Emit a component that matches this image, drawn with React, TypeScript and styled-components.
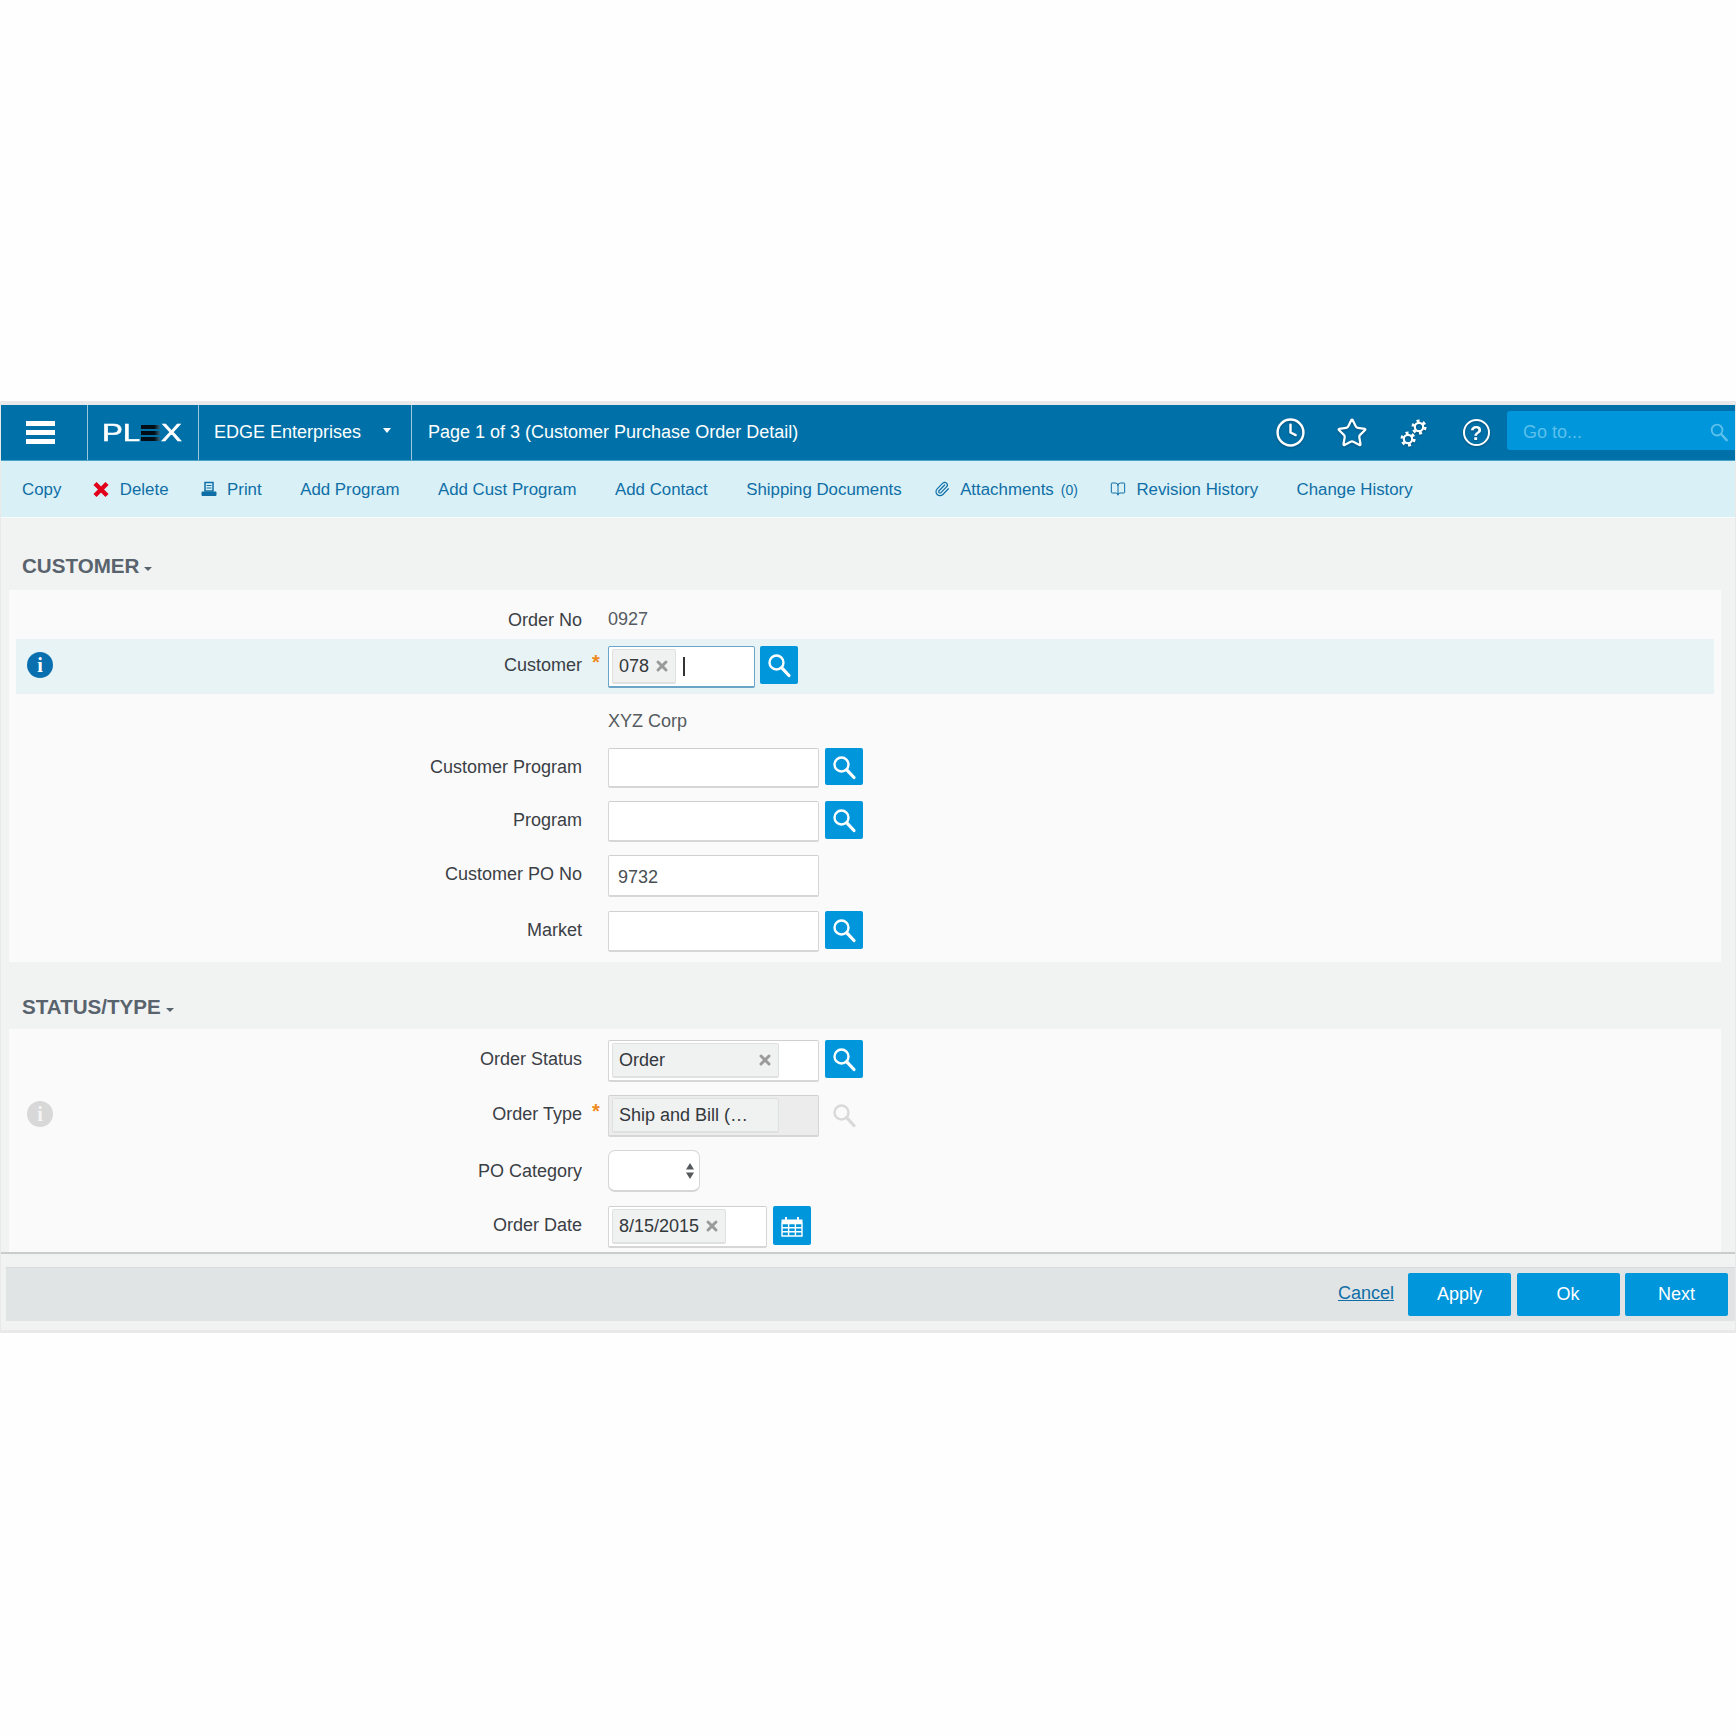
import React from "react";
import styled, { createGlobalStyle } from "styled-components";
import { BookOpen, Clock, Paperclip, Star, X } from "lucide-react";

const GlobalStyle = createGlobalStyle`
  html, body { margin: 0; padding: 0; background: #fefefe; }
  body { font-family: "Liberation Sans", Arial, sans-serif; }
`;

const Frame = styled.div`
  margin-top: 401px;
  width: 1736px;
  box-sizing: border-box;
  border: solid #e9e9e9;
  border-width: 4px 1px 3px 1px;
  background: #f1f3f3;
`;

const Header = styled.header`
  display: flex;
  height: 56px;
  box-sizing: border-box;
  background: #0071a8;
  border-bottom: 1px solid #4ba3c9;
  color: #fff;
  font-size: 18px;
`;

const HeaderCell = styled.div<{ $width?: number; $pad?: number; $sep?: boolean }>`
  display: flex;
  align-items: center;
  box-sizing: border-box;
  ${(p) => (p.$width ? `width: ${p.$width}px;` : "")}
  padding-left: ${(p) => p.$pad ?? 0}px;
  ${(p) => (p.$sep ? "border-right: 1px solid #9cc8dd;" : "")}
`;

const Burger = styled.div`
  display: flex;
  flex-direction: column;
  justify-content: space-between;
  width: 29px;
  height: 23px;
  margin-top: -1px;
  & > span { display: block; height: 5px; background: #fff; }
`;

const Logo = styled.div`
  display: flex;
  align-items: center;
  width: 80px;
  height: 20px;
`;

const LogoText = styled.span<{ $width: number }>`
  display: inline-block;
  width: ${(p) => p.$width}px;
  font-size: 23px;
  line-height: 20px;
  color: #fff;
  transform: scaleX(1.36);
  transform-origin: left center;
  font-weight: 400;
  -webkit-text-stroke: 0.5px #fff;
`;

const LogoBars = styled.span`
  display: flex;
  flex-direction: column;
  justify-content: space-between;
  width: 19px;
  height: 16px;
  margin-right: 1px;
  & > i { display: block; height: 4px; background: linear-gradient(90deg, #020d15 70%, #2f6685); }
`;

const CompanyName = styled.span`
  white-space: nowrap;
`;

const CaretWhite = styled.span`
  width: 0;
  height: 0;
  margin-left: 22px;
  margin-bottom: 4px;
  border: 4px solid transparent;
  border-top: 5px solid #fff;
  border-bottom: 0;
`;

const IconSlots = styled.div`
  margin-left: auto;
  display: flex;
  align-items: center;
`;

const IconSlot = styled.div`
  width: 62px;
  display: flex;
  justify-content: center;
  align-items: center;
  color: #fff;
  filter: drop-shadow(0 1px 1px rgba(0, 40, 70, 0.45));
`;

const HelpGlyph = styled.span`
  display: flex;
  align-items: center;
  justify-content: center;
  width: 27px;
  height: 27px;
  box-sizing: border-box;
  border: 2.4px solid #fff;
  border-radius: 50%;
  font-size: 20px;
  font-weight: 700;
  line-height: 1;
`;

const GoTo = styled.div`
  display: flex;
  align-items: center;
  justify-content: space-between;
  width: 228px;
  height: 39px;
  margin-top: -4px;
  box-sizing: border-box;
  padding: 3px 6px 0 16px;
  background: #0096dc;
  border-radius: 3px 0 0 3px;
  color: #5cc0ea;
`;

const Toolbar = styled.nav`
  display: flex;
  align-items: center;
  gap: 38.5px;
  height: 57px;
  box-sizing: border-box;
  padding: 2px 0 0 21px;
  background: #d9f1f6;
  border-bottom: 1px solid #f6fbfc;
  font-size: 16.85px;
  color: #0f6ea6;
`;

const ToolItem = styled.span<{ $icon?: boolean }>`
  display: inline-flex;
  align-items: center;
  gap: 10.5px;
  white-space: nowrap;
  ${(p) => (p.$icon ? "margin-left: -6.5px;" : "")}
`;

const ToolIcon = styled.span`
  display: inline-flex;
  justify-content: center;
  width: 16px;
  margin-top: -2px;
`;

const Count = styled.small`
  font-size: 14px;
  margin-left: 7px;
`;

const Content = styled.main`
  padding: 0 14px 0 8px;
`;

const SectionHead = styled.h2<{ $height: number; $under: number }>`
  display: flex;
  align-items: center;
  gap: 5px;
  height: ${(p) => p.$height}px;
  box-sizing: border-box;
  margin: 0;
  padding: ${(p) => p.$height - p.$under * 2}px 0 0 13px;
  font-size: 20.6px;
  font-weight: 700;
  color: #59636d;
`;

const CaretGrey = styled.span`
  width: 0;
  height: 0;
  margin-top: 5px;
  border: 4.5px solid transparent;
  border-top: 4.5px solid #59636d;
  border-bottom: 0;
`;

const Panel = styled.section<{ $height: number; $top: number }>`
  height: ${(p) => p.$height}px;
  box-sizing: border-box;
  padding-top: ${(p) => p.$top}px;
  background: #fafafa;
  overflow: hidden;
`;

const Row = styled.div<{ $height: number; $before?: number; $band?: boolean }>`
  display: grid;
  grid-template-columns: 566px 26px 1fr;
  height: ${(p) => p.$height}px;
  box-sizing: border-box;
  margin: ${(p) => p.$before ?? 0}px 7px 0;
  ${(p) => (p.$band ? "background: #e8f3f6; padding-top: 7px;" : "")}
  font-size: 18px;
  line-height: 38px;
`;

const LabelCell = styled.div<{ $down?: number }>`
  display: flex;
  align-items: center;
  height: 38px;
  padding-top: ${(p) => p.$down ?? 0}px;
`;

const Label = styled.label`
  margin-left: auto;
  color: #3a4046;
  white-space: nowrap;
`;

const InfoBadge = styled.span<{ $muted?: boolean }>`
  display: flex;
  align-items: center;
  justify-content: center;
  width: 26px;
  height: 26px;
  margin-left: 11px;
  border-radius: 50%;
  background: ${(p) => (p.$muted ? "#d8d8d8" : "#0a6fae")};
  color: ${(p) => (p.$muted ? "#f5f5f5" : "#fff")};
  font: 700 20px/26px "Liberation Serif", serif;
`;

const Required = styled.span`
  display: block;
  padding-left: 10px;
  line-height: 33px;
  color: #f08a1c;
  font-size: 20px;
  font-weight: 700;
`;

const Controls = styled.div<{ $gap?: number }>`
  display: flex;
  align-items: flex-start;
  gap: ${(p) => p.$gap ?? 6}px;
`;

const Value = styled.span<{ $down?: number }>`
  color: #555b60;
  padding-top: ${(p) => p.$down ?? 0}px;
`;

const Input = styled.div<{ $width: number; $height?: number; $focus?: boolean; $disabled?: boolean }>`
  display: flex;
  align-items: center;
  gap: 7px;
  width: ${(p) => p.$width}px;
  height: ${(p) => p.$height ?? 41}px;
  box-sizing: border-box;
  padding: 0 3px;
  background: ${(p) => (p.$disabled ? "#ececec" : "#fff")};
  border: 1px solid ${(p) => (p.$focus ? "#6aa4c8" : "#d6d6d6")};
  border-bottom-width: 2px;
  border-top-color: ${(p) => (p.$focus ? "#6aa4c8" : "#cfcfcf")};
  border-radius: 2px;
  color: #4a4f54;
  line-height: 1;
`;

const PlainValue = styled.span`
  padding: 2px 0 0 6px;
`;

const Tag = styled.span<{ $width: number }>`
  display: flex;
  align-items: center;
  justify-content: space-between;
  width: ${(p) => p.$width}px;
  height: 35px;
  flex: none;
  box-sizing: border-box;
  padding: 0 5px 0 6px;
  background: #f0f1f1;
  border: 1px solid #dfe0e0;
  border-bottom-width: 2px;
  border-radius: 2px;
  color: #33383c;
  white-space: nowrap;
`;

const Cursor = styled.span`
  width: 1.5px;
  height: 19px;
  background: #333;
`;

const IconButton = styled.button<{ $height?: number }>`
  display: flex;
  align-items: center;
  justify-content: center;
  width: 38px;
  height: ${(p) => p.$height ?? 38}px;
  padding: 0;
  border: 0;
  border-radius: 2px;
  background: #0096dc;
  color: #fff;
`;

const GhostIcon = styled.span`
  display: flex;
  align-items: center;
  justify-content: center;
  width: 38px;
  height: 38px;
  margin-top: 1px;
  color: #d9d9d9;
`;

const SelectBox = styled.div`
  display: flex;
  align-items: center;
  justify-content: flex-end;
  width: 92px;
  height: 42px;
  box-sizing: border-box;
  padding-right: 4px;
  background: #fff;
  border: 1px solid #d6d6d6;
  border-bottom-width: 2px;
  border-radius: 7px;
  color: #55595d;
`;

const Divider = styled.div`
  height: 2px;
  background: #c9cccc;
`;

const FooterBar = styled.footer`
  display: flex;
  align-items: center;
  justify-content: flex-end;
  gap: 5.5px;
  height: 54px;
  box-sizing: border-box;
  margin: 13px 0 9px 5px;
  padding: 0 7px 0 0;
  background: #e1e4e5;
  border-top: 1px solid #d8dbdc;
  font-size: 18px;
`;

const CancelLink = styled.a`
  margin-right: 8.5px;
  margin-bottom: 3px;
  color: #0f6ea6;
  text-decoration: underline;
`;

const ActionButton = styled.button`
  width: 103px;
  height: 43px;
  border: 0;
  border-radius: 2px;
  background: #0096dc;
  color: #fff;
  font: 18px "Liberation Sans", Arial, sans-serif;
`;

const Search = ({ size = 26 }: { size?: number }) => (
  <svg width={size} height={size} viewBox="0 0 26 26" fill="none" stroke="currentColor" aria-hidden="true">
    <circle cx="10.5" cy="10.5" r="7" strokeWidth="2.4" />
    <path d="M15.8 15.8 23 23.5" strokeWidth="3.2" strokeLinecap="round" />
  </svg>
);

const Gear = ({ x, y, scale }: { x: number; y: number; scale: number }) => (
  <g transform={`translate(${x} ${y}) scale(${scale})`} fill="none" stroke="currentColor">
    <circle r="4.2" strokeWidth="2.2" />
    <circle r="6.2" strokeWidth="2.8" strokeDasharray="3 3.5" />
  </g>
);

const Gears = () => (
  <svg width="32" height="32" viewBox="0 0 32 32" aria-hidden="true">
    <Gear x={21} y={10} scale={1} />
    <Gear x={10} y={22} scale={1} />
  </svg>
);

const RedX = () => (
  <svg width="17" height="17" viewBox="0 0 16 16" aria-hidden="true">
    <path d="M2 2 14 14M14 2 2 14" stroke="#e2001a" strokeWidth="4.4" />
  </svg>
);

const PrintIcon = () => (
  <svg width="16" height="16" viewBox="0 0 16 16" fill="none" stroke="#0f6ea6" aria-hidden="true">
    <path d="M4 1.5h8v8.5H4z" strokeWidth="1.5" />
    <path d="M5.5 4.5h5M5.5 7h5" strokeWidth="1.2" />
    <path d="M1 11h14v3.5H1z" fill="#0f6ea6" strokeWidth="1" />
  </svg>
);

const CalendarIcon = () => (
  <svg width="24" height="24" viewBox="0 0 24 24" fill="none" aria-hidden="true">
    <path d="M1.5 5.5h21v4h-21z" fill="#fff" />
    <path d="M6 3v4M18 3v4" stroke="#fff" strokeWidth="2" />
    <path d="M2 9.5h20v12.5H2zM2 13.7h20M2 17.8h20M8.6 9.5V22M15.4 9.5V22" stroke="#fff" strokeWidth="1.4" />
  </svg>
);

const SortArrows = () => (
  <svg width="10" height="20" viewBox="0 0 10 20" fill="currentColor" aria-hidden="true">
    <path d="M5 2 9 8.5H1zM5 18 1 11.5h8z" />
  </svg>
);

const Remove = () => <X size={16} strokeWidth={4.4} color="#9a9a9a" />;

export default function App() {
  return (
    <>
      <GlobalStyle />
      <Frame>
        <Header>
          <HeaderCell $width={87} $pad={25} $sep>
            <Burger>
              <span />
              <span />
              <span />
            </Burger>
          </HeaderCell>
          <HeaderCell $width={111} $pad={14} $sep>
            <Logo>
              <LogoText $width={39}>PL</LogoText>
              <LogoBars>
                <i />
                <i />
                <i />
              </LogoBars>
              <LogoText $width={21}>X</LogoText>
            </Logo>
          </HeaderCell>
          <HeaderCell $width={213} $pad={15} $sep>
            <CompanyName>EDGE Enterprises</CompanyName>
            <CaretWhite />
          </HeaderCell>
          <HeaderCell $pad={16}>
            <CompanyName>Page 1 of 3 (Customer Purchase Order Detail)</CompanyName>
          </HeaderCell>
          <IconSlots>
            <IconSlot>
              <Clock size={31} strokeWidth={1.9} />
            </IconSlot>
            <IconSlot>
              <Star size={32} strokeWidth={1.7} />
            </IconSlot>
            <IconSlot>
              <Gears />
            </IconSlot>
            <IconSlot>
              <HelpGlyph>?</HelpGlyph>
            </IconSlot>
            <GoTo>
              Go to...
              <Search size={20} />
            </GoTo>
          </IconSlots>
        </Header>
        <Toolbar>
          <ToolItem>Copy</ToolItem>
          <ToolItem $icon>
            <ToolIcon>
              <RedX />
            </ToolIcon>
            Delete
          </ToolItem>
          <ToolItem $icon>
            <ToolIcon>
              <PrintIcon />
            </ToolIcon>
            Print
          </ToolItem>
          <ToolItem>Add Program</ToolItem>
          <ToolItem>Add Cust Program</ToolItem>
          <ToolItem>Add Contact</ToolItem>
          <ToolItem>Shipping Documents</ToolItem>
          <ToolItem $icon>
            <ToolIcon>
              <Paperclip size={16} strokeWidth={1.8} />
            </ToolIcon>
            <span>
              Attachments<Count>(0)</Count>
            </span>
          </ToolItem>
          <ToolItem $icon>
            <ToolIcon>
              <BookOpen size={16} strokeWidth={1.5} />
            </ToolIcon>
            Revision History
          </ToolItem>
          <ToolItem>Change History</ToolItem>
        </Toolbar>
        <Content>
          <SectionHead $height={72} $under={24}>
            CUSTOMER
            <CaretGrey />
          </SectionHead>
          <Panel $height={372} $top={0}>
            <Row $height={40} $before={9}>
              <LabelCell $down={2}>
                <Label>Order No</Label>
              </LabelCell>
              <span />
              <Value $down={1}>0927</Value>
            </Row>
            <Row $height={55} $band>
              <LabelCell>
                <InfoBadge>i</InfoBadge>
                <Label>Customer</Label>
              </LabelCell>
              <Required>*</Required>
              <Controls $gap={5}>
                <Input $width={147} $height={42} $focus>
                  <Tag $width={64}>
                    078
                    <Remove />
                  </Tag>
                  <Cursor />
                </Input>
                <IconButton>
                  <Search />
                </IconButton>
              </Controls>
            </Row>
            <Row $height={46} $before={8}>
              <span />
              <span />
              <Value>XYZ Corp</Value>
            </Row>
            <Row $height={53}>
              <LabelCell>
                <Label>Customer Program</Label>
              </LabelCell>
              <span />
              <Controls>
                <Input $width={211} $height={40} />
                <IconButton $height={37}>
                  <Search />
                </IconButton>
              </Controls>
            </Row>
            <Row $height={54}>
              <LabelCell>
                <Label>Program</Label>
              </LabelCell>
              <span />
              <Controls>
                <Input $width={211} />
                <IconButton>
                  <Search />
                </IconButton>
              </Controls>
            </Row>
            <Row $height={56}>
              <LabelCell>
                <Label>Customer PO No</Label>
              </LabelCell>
              <span />
              <Controls>
                <Input $width={211} $height={42}>
                  <PlainValue>9732</PlainValue>
                </Input>
              </Controls>
            </Row>
            <Row $height={51}>
              <LabelCell>
                <Label>Market</Label>
              </LabelCell>
              <span />
              <Controls>
                <Input $width={211} />
                <IconButton>
                  <Search />
                </IconButton>
              </Controls>
            </Row>
          </Panel>
          <SectionHead $height={67} $under={22}>
            STATUS/TYPE
            <CaretGrey />
          </SectionHead>
          <Panel $height={223} $top={11}>
            <Row $height={55}>
              <LabelCell>
                <Label>Order Status</Label>
              </LabelCell>
              <span />
              <Controls>
                <Input $width={211} $height={42}>
                  <Tag $width={167}>
                    Order
                    <Remove />
                  </Tag>
                </Input>
                <IconButton>
                  <Search />
                </IconButton>
              </Controls>
            </Row>
            <Row $height={55}>
              <LabelCell>
                <InfoBadge $muted>i</InfoBadge>
                <Label>Order Type</Label>
              </LabelCell>
              <Required>*</Required>
              <Controls>
                <Input $width={211} $height={42} $disabled>
                  <Tag $width={167}>Ship and Bill (…</Tag>
                </Input>
                <GhostIcon>
                  <Search />
                </GhostIcon>
              </Controls>
            </Row>
            <Row $height={56}>
              <LabelCell $down={2}>
                <Label>PO Category</Label>
              </LabelCell>
              <span />
              <Controls>
                <SelectBox>
                  <SortArrows />
                </SelectBox>
              </Controls>
            </Row>
            <Row $height={46}>
              <LabelCell>
                <Label>Order Date</Label>
              </LabelCell>
              <span />
              <Controls>
                <Input $width={159} $height={42}>
                  <Tag $width={114}>
                    8/15/2015
                    <Remove />
                  </Tag>
                </Input>
                <IconButton $height={39}>
                  <CalendarIcon />
                </IconButton>
              </Controls>
            </Row>
          </Panel>
        </Content>
        <Divider />
        <FooterBar>
          <CancelLink>Cancel</CancelLink>
          <ActionButton>Apply</ActionButton>
          <ActionButton>Ok</ActionButton>
          <ActionButton>Next</ActionButton>
        </FooterBar>
      </Frame>
    </>
  );
}
